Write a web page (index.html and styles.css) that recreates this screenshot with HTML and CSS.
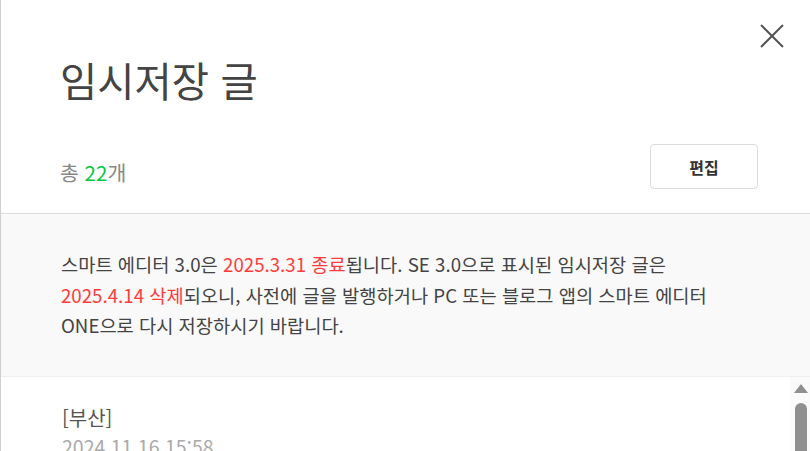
FILE: index.html
```html
<!DOCTYPE html>
<html lang="ko">
<head>
<meta charset="utf-8">
<title>임시저장 글</title>
<link rel="stylesheet" href="styles.css">
</head>
<body>
<div class="panel">
  <button class="close" aria-label="닫기">
    <svg width="24" height="24" viewBox="0 0 24 24"><path d="M1 1 L23 23 M23 1 L1 23" stroke="#555" stroke-width="2" fill="none"/></svg>
  </button>
  <header class="header">
    <h1 class="title">임시저장 글</h1>
    <div class="meta">
      <span class="count">총 <em class="num">22</em>개</span>
      <button class="edit">편집</button>
    </div>
  </header>
  <section class="notice">
    <p>스마트 에디터 3.0은 <span class="red">2025.3.31 종료</span>됩니다. SE 3.0으로 표시된 임시저장 글은<br><span class="red">2025.4.14 삭제</span>되오니, 사전에 글을 발행하거나 PC 또는 블로그 앱의 스마트 에디터<br>ONE으로 다시 저장하시기 바랍니다.</p>
  </section>
  <section class="list">
    <div class="item">
      <div class="item-title">[부산]</div>
      <div class="item-date">2024.11.16 15:58</div>
    </div>
    <div class="scrollbar">
      <div class="arrow"></div>
      <div class="thumb"></div>
    </div>
  </section>
</div>
</body>
</html>
```
FILE: styles.css
```css
html, body {
  margin: 0;
  padding: 0;
  background: #fff;
  height: 100%;
  overflow: hidden;
}
body {
  font-family: "Noto Sans CJK KR", "Noto Sans", sans-serif;
  color: #333;
}
.panel {
  position: relative;
  border-left: 1px solid #cfcfcf;
  height: 451px;
  box-sizing: border-box;
  overflow: hidden;
}
.close {
  position: absolute;
  top: 24px;
  right: 26px;
  width: 24px;
  height: 24px;
  padding: 0;
  border: 0;
  background: none;
  display: flex;
}
.header {
  height: 214px;
  box-sizing: border-box;
  padding: 51px 52px 0 59px;
  border-bottom: 1px solid #dddddd;
}
.title {
  margin: 0;
  font-size: 40.5px;
  line-height: 58px;
  font-weight: 400;
  color: #444;
}
.meta {
  margin-top: 35px;
  display: flex;
  justify-content: space-between;
  align-items: center;
}
.count {
  font-size: 20.5px;
  color: #888;
  padding-top: 10px;
}
.num {
  font-style: normal;
  color: #00c73c;
}
.edit {
  width: 108px;
  height: 45px;
  border: 1px solid #dcdcdc;
  border-radius: 4px;
  background: #fff;
  font-family: inherit;
  font-size: 16px;
  font-weight: 700;
  color: #333;
}
.notice {
  background: #f9f9f9;
  border-bottom: 1px solid #eeeeee;
  padding: 35px 40px 35px 60px;
}
.notice p {
  margin: 0;
  font-size: 18.7px;
  line-height: 30.5px;
  color: #444;
}
.red {
  color: #ff3b3b;
}
.list {
  position: relative;
  padding: 26px 40px 0 61px;
}
.item-title {
  font-size: 20px;
  line-height: 30px;
  color: #555;
}
.item-date {
  margin-top: 1px;
  font-size: 19.5px;
  line-height: 26px;
  color: #aaa;
}
.scrollbar {
  position: absolute;
  top: 0;
  right: 0;
  width: 20px;
  height: 100px;
  background: #fafafa;
}
.arrow {
  margin: 7px auto 0 4px;
  width: 0;
  height: 0;
  border-left: 7px solid transparent;
  border-right: 7px solid transparent;
  border-bottom: 9px solid #8f8f8f;
}
.thumb {
  margin: 10px 0 0 5px;
  width: 12px;
  height: 80px;
  border-radius: 6px 6px 0 0;
  background: #8f8f8f;
}
```
